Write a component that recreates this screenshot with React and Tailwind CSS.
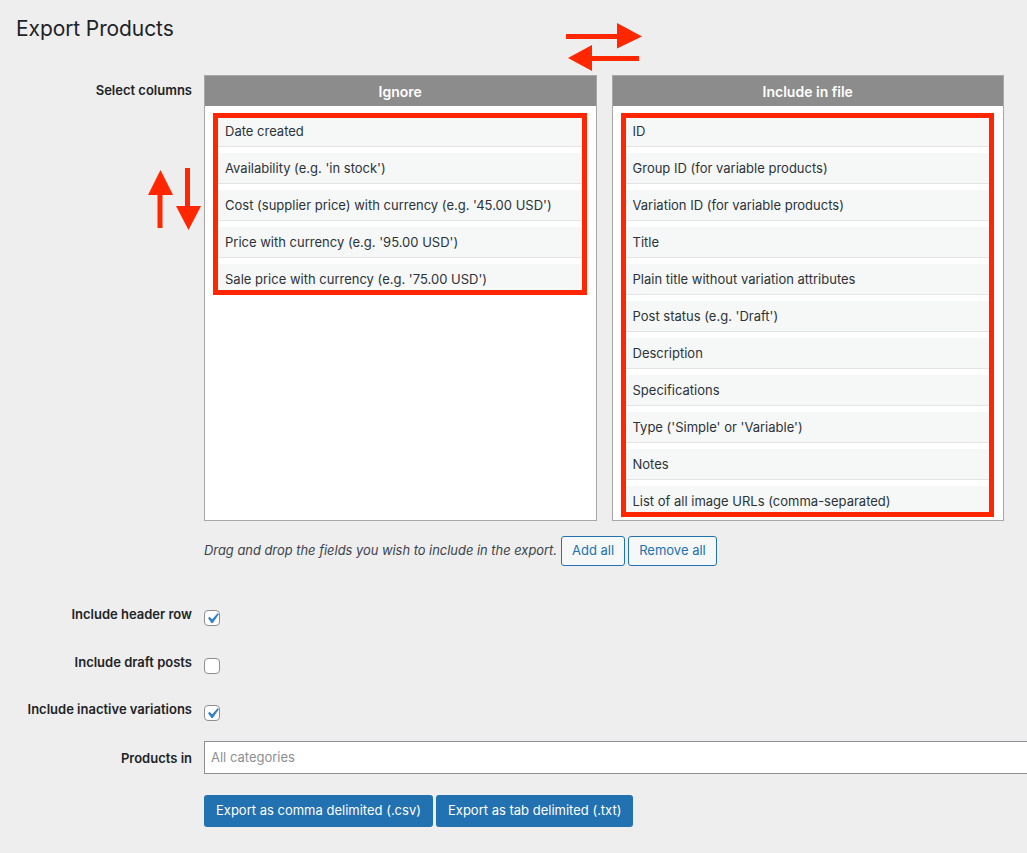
import React from "react";

const ignore = [
  "Date created",
  "Availability (e.g. 'in stock')",
  "Cost (supplier price) with currency (e.g. '45.00 USD')",
  "Price with currency (e.g. '95.00 USD')",
  "Sale price with currency (e.g. '75.00 USD')",
];

const include = [
  "ID",
  "Group ID (for variable products)",
  "Variation ID (for variable products)",
  "Title",
  "Plain title without variation attributes",
  "Post status (e.g. 'Draft')",
  "Description",
  "Specifications",
  "Type ('Simple' or 'Variable')",
  "Notes",
  "List of all image URLs (comma-separated)",
];

function Panel({ title, items }) {
  return (
    <div className="h-[446px] border border-[#a7a7a7] bg-white flex flex-col">
      <div className="h-[30px] bg-[#8c8c8c] flex items-center justify-center text-white text-[14px] font-semibold">
        {title}
      </div>
      <div className="pl-[8px] pr-[14px] pt-[10px]">
        <div className="relative flex flex-col gap-[6px]">
          {items.map((t) => (
            <div
              key={t}
              className="h-[31px] bg-[#f6f7f7] border-b border-[#e4e4e4] pl-[12px] pt-[1px] flex items-center text-[13px] text-[#2c3338] whitespace-nowrap"
            >
              {t}
            </div>
          ))}
          <div className="absolute -top-[3px] left-0 -right-[5px] bottom-0 border-[5px] border-[#ff2600] pointer-events-none" />
        </div>
      </div>
    </div>
  );
}

function Checkbox({ checked }) {
  return (
    <div className="relative w-[16px] h-[16px] rounded-[4px] border border-[#8c8f94] bg-white">
      {checked && (
        <svg
          viewBox="0 0 20 20"
          className="absolute -left-[3px] -top-[3px] w-[21px] h-[21px]"
        >
          <path
            d="M14.83 4.89l1.34.94-5.81 8.38H9.02L5.78 9.67l1.34-1.25 2.57 2.4z"
            fill="#3582c4"
          />
        </svg>
      )}
    </div>
  );
}

function Label({ children, className = "" }) {
  return (
    <div
      className={
        "w-[192px] shrink-0 text-right text-[13px] font-semibold leading-[20px] text-[#1d2327] " +
        className
      }
    >
      {children}
    </div>
  );
}

function CheckRow({ label, checked, className }) {
  return (
    <div className={"flex items-start h-[20px] " + className}>
      <Label>{label}</Label>
      <div className="ml-[12px] mt-[6px]">
        <Checkbox checked={checked} />
      </div>
    </div>
  );
}

export default function App() {
  return (
    <div className="relative w-[1027px] h-[853px] overflow-hidden bg-[#eeeeee] font-['Inter',sans-serif] text-[#1d2327]">
      <h1 className="ml-[16px] pt-[14px] text-[21px] tracking-[-0.1px] leading-[30px] font-normal text-[#1d2327]">
        Export Products
      </h1>

      <div className="mt-[31px] flex">
        <Label className="pt-[5px]">Select columns</Label>
        <div className="ml-[12px] w-[800px] shrink-0">
          <div className="grid grid-cols-2 gap-[15px]">
            <Panel title="Ignore" items={ignore} />
            <Panel title="Include in file" items={include} />
          </div>
          <div className="mt-[15px] h-[30px] flex items-center gap-[3px]">
            <span className="italic text-[12.9px] text-[#3c434a] mr-[1px]">
              Drag and drop the fields you wish to include in the export.
            </span>
            <button className="h-[30px] px-[10px] rounded-[3px] border border-[#2271b1] bg-[#f6f7f7] text-[#2271b1] text-[13px]">
              Add all
            </button>
            <button className="h-[30px] px-[10px] rounded-[3px] border border-[#2271b1] bg-[#f6f7f7] text-[#2271b1] text-[13px]">
              Remove all
            </button>
          </div>
        </div>
      </div>

      <CheckRow className="mt-[38px]" label="Include header row" checked />
      <CheckRow className="mt-[28px]" label="Include draft posts" />
      <CheckRow className="mt-[27px]" label="Include inactive variations" checked />

      <div className="mt-[22px] flex items-center">
        <Label>Products in</Label>
        <div className="ml-[12px] w-[860px] shrink-0 h-[33px] bg-white border border-[#8c8f94] flex items-center pl-[6px] text-[13px] text-[#8c8f94]">
          All categories
        </div>
      </div>

      <div className="mt-[21px] flex">
        <div className="w-[192px] shrink-0" />
        <div className="ml-[12px] flex gap-[3px]">
          <button className="h-[32px] px-[12px] rounded-[3px] bg-[#2271b1] text-white text-[13px]">
            Export as comma delimited (.csv)
          </button>
          <button className="h-[32px] px-[12px] rounded-[3px] bg-[#2271b1] text-white text-[13px]">
            Export as tab delimited (.txt)
          </button>
        </div>
      </div>

      <svg
        className="absolute left-0 top-0 pointer-events-none"
        width="1027"
        height="853"
        viewBox="0 0 1027 853"
      >
        <g fill="#ff2600">
          <rect x="566" y="34" width="52" height="5" />
          <polygon points="617,23 642,36.5 617,48.5" />
          <rect x="591" y="56" width="48" height="5" />
          <polygon points="568,58 592,45 592,71" />
          <polygon points="148,195 160.5,170 173,195" />
          <rect x="157.5" y="194" width="5" height="34" />
          <rect x="185" y="168" width="5" height="39" />
          <polygon points="176,206 201,206 188.5,230" />
        </g>
      </svg>
    </div>
  );
}
